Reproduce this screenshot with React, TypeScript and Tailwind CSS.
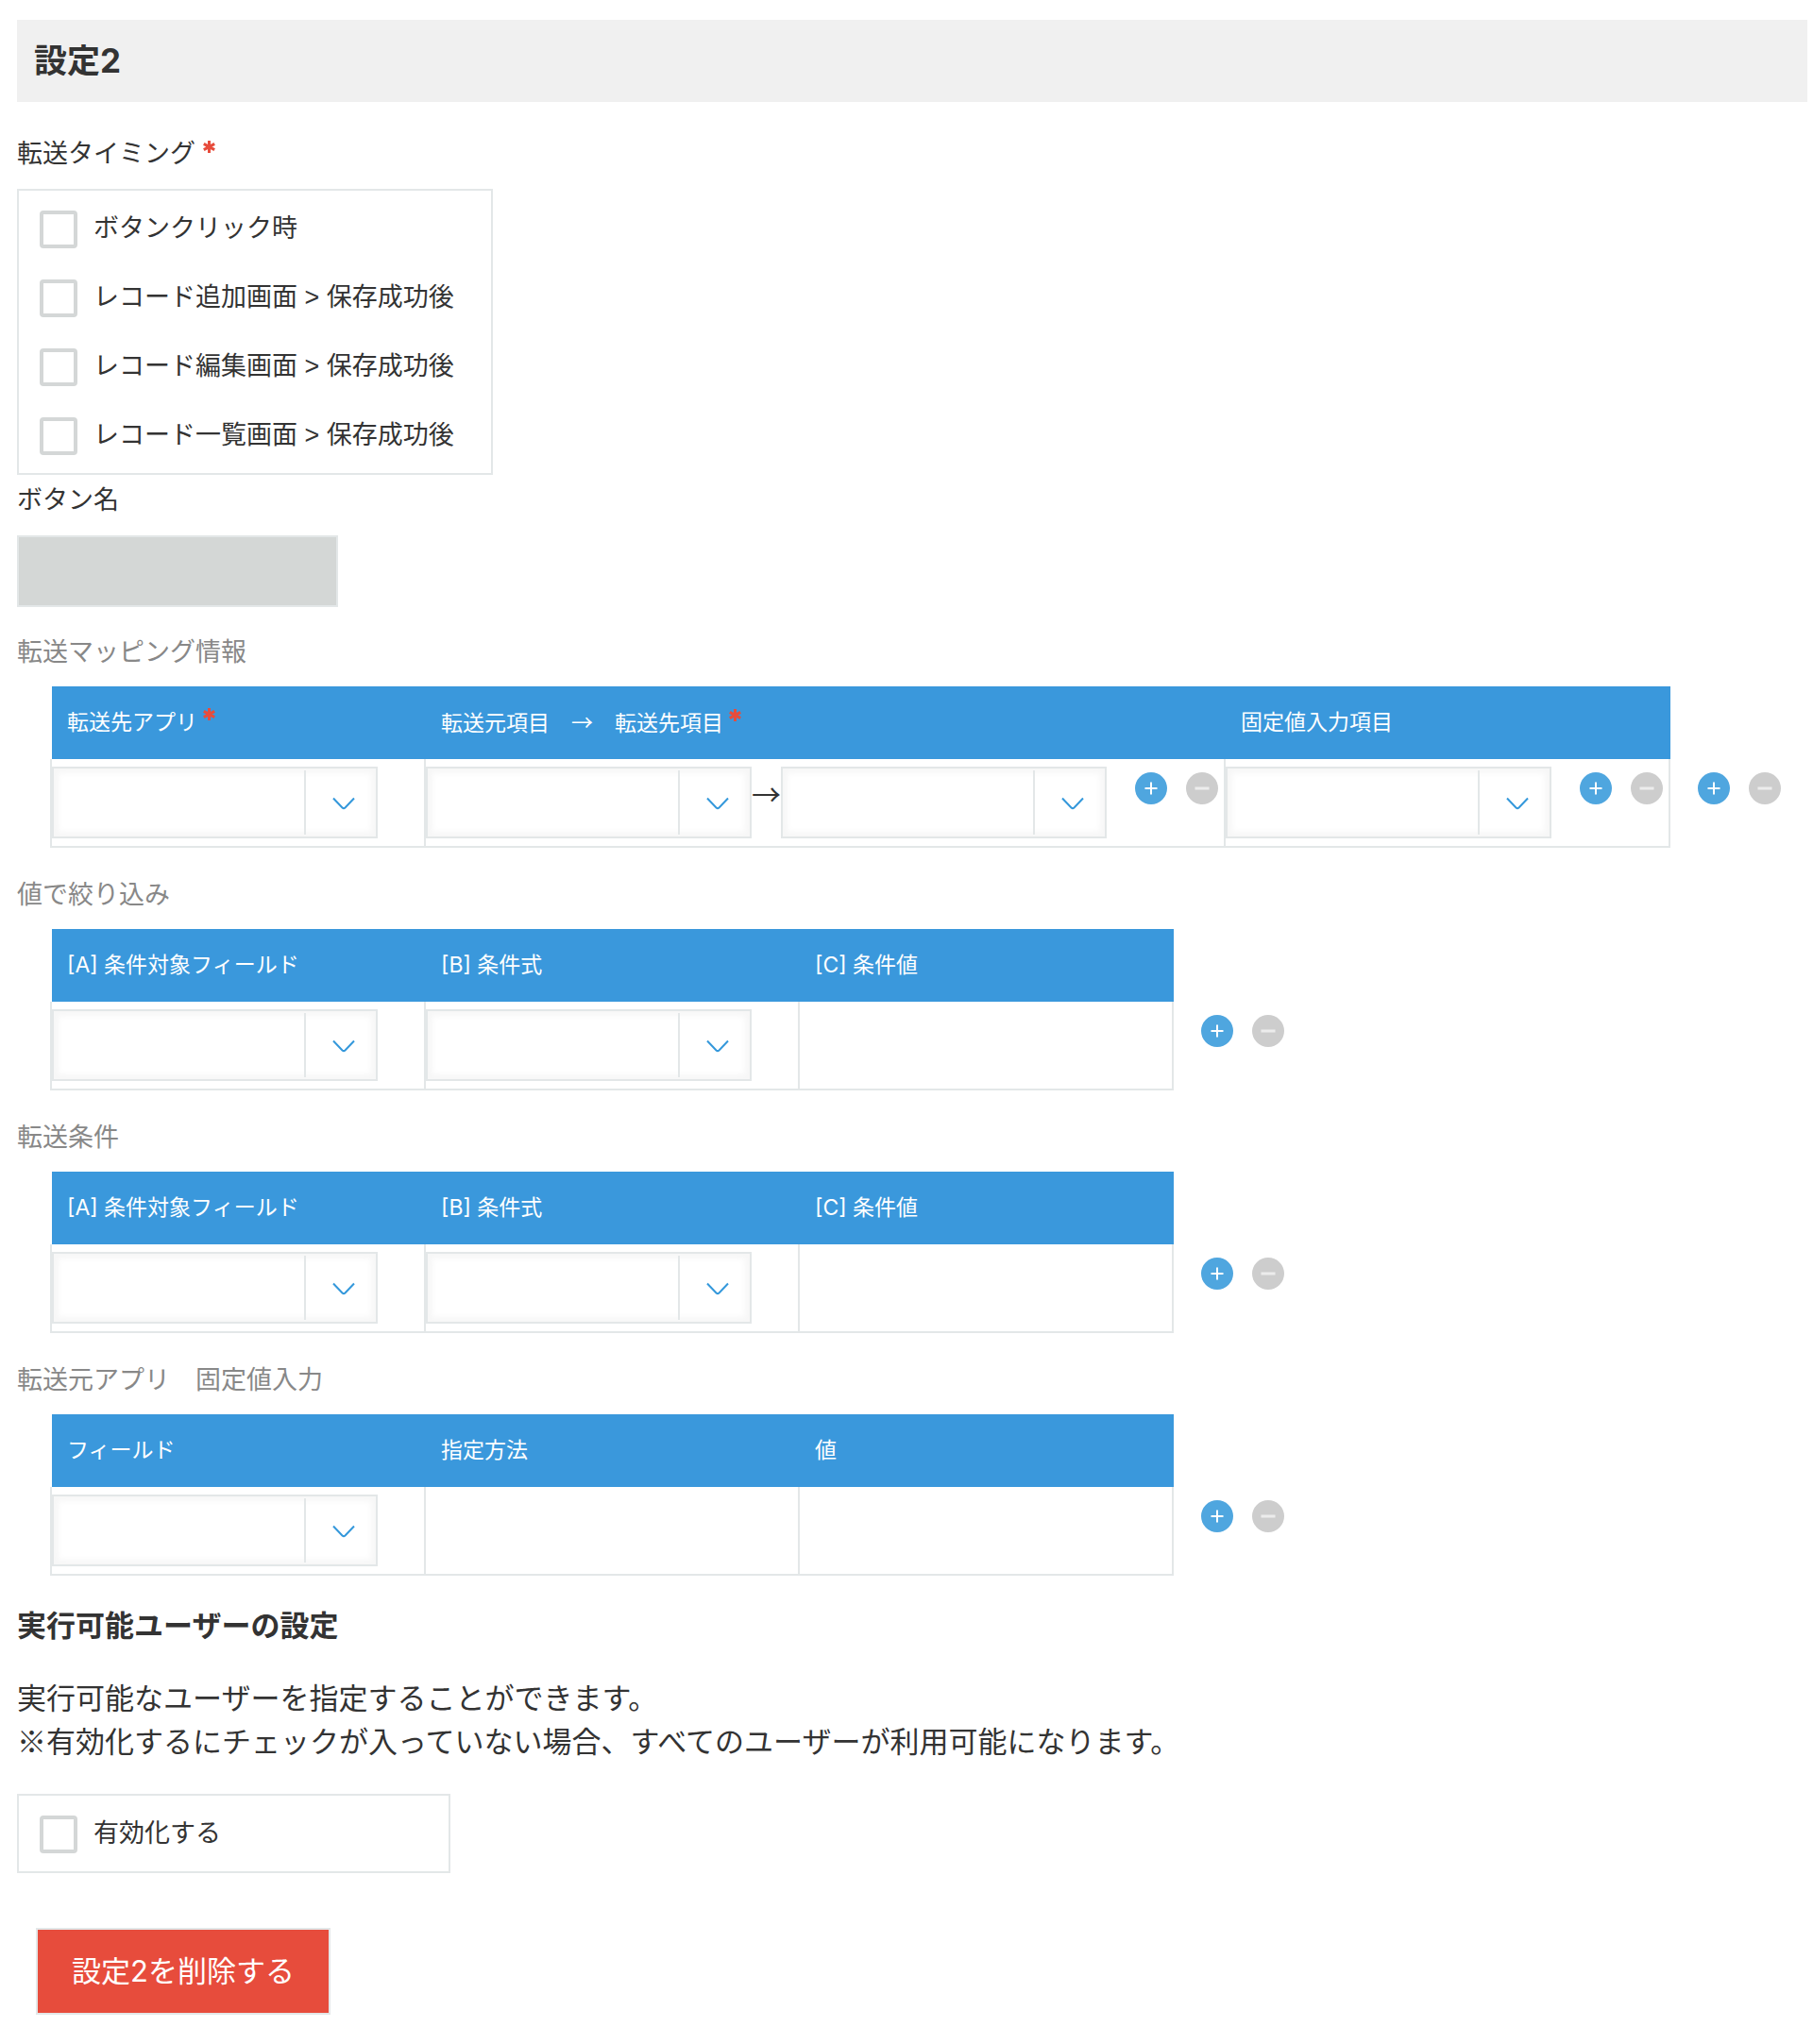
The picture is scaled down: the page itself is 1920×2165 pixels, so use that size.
import type { ReactNode } from 'react';

const timings = [
  'ボタンクリック時',
  'レコード追加画面 > 保存成功後',
  'レコード編集画面 > 保存成功後',
  'レコード一覧画面 > 保存成功後',
];

function Required() {
  return (
    <svg viewBox="0 0 13 13" className="inline-block w-[13px] h-[13px] mb-[10px] align-baseline" role="img" aria-label="必須">
      <path
        d="M6.5 0V13M0.8 3.4L12.2 9.6M12.2 3.4L0.8 9.6"
        stroke="#e74c3c"
        strokeWidth="3"
        fill="none"
      />
    </svg>
  );
}

function CheckItem({ label }: { label: string }) {
  return (
    <label className="flex items-center gap-[17px] h-[40px] text-[27px] leading-[40px]">
      <input
        type="checkbox"
        className="appearance-none shrink-0 w-[40px] h-[40px] border-4 border-[#d4d7d7] rounded-[4px] bg-white checked:bg-[#3498db]"
      />
      <span className="pb-[2px]">{label}</span>
    </label>
  );
}

function Dropdown({ label }: { label: string }) {
  return (
    <div className="relative inline-block w-[345px] h-[76px] align-top">
      <select
        aria-label={label}
        className="appearance-none block w-full h-full bg-white border-2 border-[#e3e7e8] shadow-[inset_0_0_6px_5px_#f7f7f7] outline-none"
      >
        <option value=""></option>
      </select>
      {/* arrow area over the right end of the select */}
      <span className="absolute right-0 top-[4px] bottom-[4px] w-[78px] border-l-2 border-[#e3e7e8] pointer-events-none">
        <svg viewBox="0 0 24 14" className="absolute left-[28px] top-[28px] w-[24px] h-[14px]">
          <path d="M1 1.5L10.5 11.5Q12 12.8 13.5 11.5L23 1.5" fill="none" stroke="#3498db" strokeWidth="2" />
        </svg>
      </span>
    </div>
  );
}

function RowButtons() {
  return (
    <div className="flex gap-[20px]">
      <button type="button" aria-label="行を追加" className="w-[34px] h-[34px]">
        <svg viewBox="0 0 34 34" className="block w-full h-full">
          <circle cx="17" cy="17" r="17" fill="#4fa6df" />
          <path d="M17 10.5V23.5M10.5 17H23.5" stroke="#fff" strokeWidth="2" />
        </svg>
      </button>
      <button type="button" aria-label="行を削除" className="w-[34px] h-[34px]">
        <svg viewBox="0 0 34 34" className="block w-full h-full">
          <circle cx="17" cy="17" r="17" fill="#cdcdcd" />
          <path d="M9.5 17H24.5" stroke="#ececec" strokeWidth="3" />
        </svg>
      </button>
    </div>
  );
}

function Th({ width, children }: { width: string; children: ReactNode }) {
  return (
    <th
      scope="col"
      className={`${width} h-[77px] p-0 pl-[16px] bg-[#3a98dc] border-l-2 border-[#3a98dc] first:border-white text-left text-[23px] font-normal text-white font-['Inter','Noto_Sans_CJK_JP',sans-serif]`}
    >
      {children}
    </th>
  );
}

function Td({ children }: { children?: ReactNode }) {
  return (
    <td className="h-[94px] p-0 pt-[8px] align-top border-b-2 border-l-2 border-[#e3e7e8]">
      {children}
    </td>
  );
}

function EndCell() {
  return (
    <td className="p-0 pt-[14px] pl-[29px] align-top border-l-2 border-[#e3e7e8]">
      <RowButtons />
    </td>
  );
}

function Section({ title, children }: { title: string; children: ReactNode }) {
  return (
    <section className="h-[257px]">
      <h3 className="text-[27px] leading-[40px] text-[#888]">{title}</h3>
      <table className="mt-[16px] ml-[35px] table-fixed w-[1840px] border-separate border-spacing-0">{children}</table>
    </section>
  );
}

function ConditionTable({ title, heads, selects }: { title: string; heads: string[]; selects: number }) {
  return (
    <Section title={title}>
      <thead>
        <tr>
          {heads.map((h) => (
            <Th key={h} width="w-[396px]">{h}</Th>
          ))}
          <td className="border-l-2 border-[#3a98dc]"></td>
        </tr>
      </thead>
      <tbody>
        <tr>
          {heads.map((h, i) => (
            <Td key={h}>{i < selects && <Dropdown label={h} />}</Td>
          ))}
          <EndCell />
        </tr>
      </tbody>
    </Section>
  );
}

export default function App() {
  const conditionHeads = ['[A] 条件対象フィールド', '[B] 条件式', '[C] 条件値'];

  return (
    <main className="pt-[21px] pl-[18px] pr-[6px] pb-[32px] bg-white text-[#333] font-['Liberation_Sans','Noto_Sans_CJK_JP',sans-serif]">
      <h2 className="h-[87px] pl-[18px] bg-[#f0f0f0] text-[35px] leading-[86px] font-bold font-['Inter','Noto_Sans_CJK_JP',sans-serif]">
        設定2
      </h2>

      <div className="mt-[35px] text-[27px] leading-[40px]">
        転送タイミング <Required />
      </div>
      <div className="mt-[17px] w-[504px] h-[303px] pt-[21px] pl-[22px] border-2 border-[#e3e7e8] flex flex-col gap-[33px]">
        {timings.map((t) => (
          <CheckItem key={t} label={t} />
        ))}
      </div>

      <label htmlFor="button-name" className="block mt-[7px] text-[27px] leading-[40px]">ボタン名</label>
      <input
        id="button-name"
        type="text"
        disabled
        className="block mt-[17px] w-[340px] h-[76px] bg-[#d4d7d6] border-2 border-[#e3e7e8]"
      />

      <div className="mt-[28px]">
        <Section title="転送マッピング情報">
          <thead>
            <tr>
              <Th width="w-[396px]">転送先アプリ <Required /></Th>
              <Th width="w-[847px]">
                転送元項目　<span className="font-['Noto_Sans_CJK_JP',sans-serif]">→</span>　転送先項目 <Required />
              </Th>
              <Th width="w-[471px]">固定値入力項目</Th>
              <td className="border-l-2 border-[#3a98dc]"></td>
            </tr>
          </thead>
          <tbody>
            <tr>
              <Td><Dropdown label="転送先アプリ" /></Td>
              <Td>
                <div className="flex">
                  <Dropdown label="転送元項目" />
                  <span className="w-[31px] text-center text-[31px] leading-[56px] font-['Noto_Sans_CJK_JP',sans-serif]">→</span>
                  <Dropdown label="転送先項目" />
                  <div className="pt-[6px] pl-[30px]"><RowButtons /></div>
                </div>
              </Td>
              <Td>
                <div className="flex">
                  <Dropdown label="固定値入力項目" />
                  <div className="pt-[6px] pl-[30px]"><RowButtons /></div>
                </div>
              </Td>
              <EndCell />
            </tr>
          </tbody>
        </Section>
        <ConditionTable title="値で絞り込み" heads={conditionHeads} selects={2} />
        <ConditionTable title="転送条件" heads={conditionHeads} selects={2} />
        <ConditionTable title="転送元アプリ　固定値入力" heads={['フィールド', '指定方法', '値']} selects={1} />
      </div>

      <h3 className="mt-[1px] text-[31px] leading-[46px] font-bold">実行可能ユーザーの設定</h3>
      <p className="mt-[31px] text-[31px] leading-[46px]">
        実行可能なユーザーを指定することができます。
        <br />
        ※有効化するにチェックが入っていない場合、すべてのユーザーが利用可能になります。
      </p>

      <div className="mt-[31px] w-[459px] h-[84px] pt-[21px] pl-[22px] border-2 border-[#e3e7e8]">
        <CheckItem label="有効化する" />
      </div>

      <button
        type="button"
        className="block mt-[58px] ml-[20px] w-[312px] h-[92px] bg-[#e74c3c] border-2 border-[#e3e7e8] text-[31px] text-white font-['Inter','Noto_Sans_CJK_JP',sans-serif]"
      >
        設定2を削除する
      </button>
    </main>
  );
}
